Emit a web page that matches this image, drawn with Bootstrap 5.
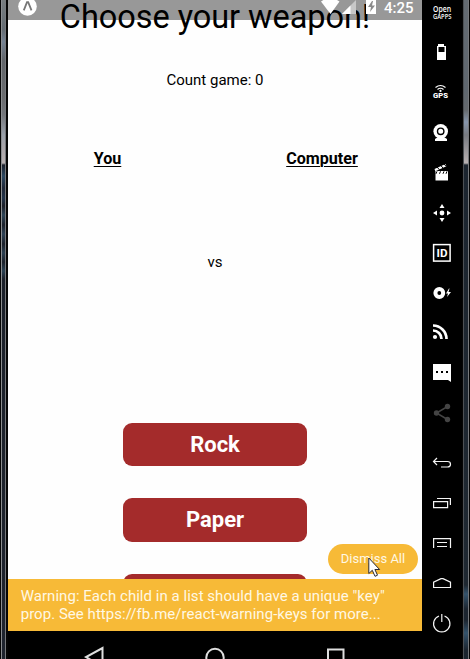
<!DOCTYPE html>
<html lang="en">
<head>
<meta charset="utf-8">
<meta name="viewport" content="width=device-width, initial-scale=1">
<title>Choose your weapon!</title>
<link href="https://cdn.jsdelivr.net/npm/bootstrap@5.3.0/dist/css/bootstrap.min.css" rel="stylesheet">
<style>
body{width:470px;height:659px;font-family:Roboto,"Liberation Sans",sans-serif;color:#000;background:#000}
svg{display:block}
.device{width:470px;height:659px}
.edge{width:8px;flex:none;background:#050505;padding:0 2px 0 1px}
.edge-r{padding:0 1px}
.glass{border-left:1px solid #8b8d90;border-right:1px solid #77797c;width:6px;
background:linear-gradient(#777d80 0,#656d74 30px,#748293 42px,#62666b 60px,#6b6d70 98px,#74777c 115px,#9aa1ab 135px,#aaa6aa 148px,#b8b1b2 163px,#1c212d 165px,#2c4962 176px,#202838 188px,#22344b 198px,#1c1f28 206px,#2d4558 215px,#1c212b 225px,#2d4256 234px,#1c212b 244px,#2b4052 253px,#1c212b 262px,#2b4254 271px,#1c212b 279px,#1f242e 100%)}
.edge-r .glass{border-left-color:#4c5054;background:linear-gradient(#646b72 0,#5f676f 90px,#65696d 110px,#8695ab 122px,#777a80 135px,#b8b1b2 163px,#1c252f 165px,#1f2831 585px,#34536c 594px,#1c252f 609px,#1c252f 620px,#34536c 633px,#1c252f 650px)}
.screen{width:414px;flex:none}
.app{height:631px;background:#fefefe}
.app h1{font-size:32.5px;line-height:40px;font-weight:400;margin:-3px 0 0;white-space:nowrap;letter-spacing:-.05px}
.count{font-size:15px;line-height:20px;margin-top:33px}
.players{margin-top:59px;font-size:16.1px;line-height:20px;font-weight:700}
.players div{width:214.500px;flex:none}
.players div:first-child{width:199px}
.players div:last-child{width:230px}
.players span{text-decoration:underline;text-decoration-thickness:1px;text-underline-offset:2px}
.versus{font-size:15px;line-height:20px;margin-top:83px}
.weapons{margin-top:151px;gap:32.3px}
.weapons .btn{width:184px;height:43.2px;flex:none;border:0;border-radius:9px;background:#a42b2b;color:#fff;font-size:22px;font-weight:700;line-height:44px;padding:0}
.status{height:20px;background:rgba(0,0,0,.4);left:0;top:0;right:0}
.clock{color:#fff;font-size:15px;line-height:16px;font-weight:500;left:376px;top:0}
.warning{left:0;right:0;bottom:0;height:52px;padding:8px 12.7px;background:#f7ba37;color:#fff8e4;font-size:15px;line-height:18px;letter-spacing:.035px}
.dismiss{left:320px;top:544px;width:90px;height:30px;border:0;background:#f7ba37;color:#fff8e4;font-size:13px;line-height:30px;padding:0}
.cursor{left:360px;top:557px}
.tools{width:40px;flex:none;margin-top:-8px}
.tools svg{width:40px;height:40px;flex:none}
.tools svg:nth-child(12){margin-top:11px}
.solid{fill:#fff}
.thin{fill:none;stroke:#f4f4f4;stroke-width:1.2}
</style>
</head>
<body class="overflow-hidden">
<div class="device d-flex overflow-hidden">
  <div class="edge d-flex"><div class="glass"></div></div>
  <main class="screen d-flex flex-column">
    <div class="app position-relative overflow-hidden d-flex flex-column text-center">
      <h1>Choose your weapon!</h1>
      <div class="count">Count game: 0</div>
      <div class="players d-flex"><div><span>You</span></div><div><span>Computer</span></div></div>
      <div class="versus">vs</div>
      <div class="weapons d-flex flex-column align-items-center">
        <button class="btn">Rock</button>
        <button class="btn">Paper</button>
        <button class="btn" aria-label="Scissors"></button>
      </div>
      <div class="status position-absolute">
        <svg width="414" height="20" viewBox="8 0 414 20">
          <circle cx="27.5" cy="6.5" r="9.3" fill="#fff"/>
          <path d="M23.8 10.3 27 2.2h1.2l3.3 8.1" fill="none" stroke="#777" stroke-width="1.8"/>
          <path d="M321 1.5Q330-5 339.500 1.500L330.500 14Z" fill="#fff"/>
          <path d="M342 14 356 0V14Z" fill="#c7c7c7"/><path d="M342 14 350.500 5.500V14Z" fill="#fff"/>
          <path d="M366 0h10v14h-10Z" fill="#fff"/><path d="m372 1-4 6h3l-1 5 5-6.500h-3l1-4.500Z" fill="#8b8b8b"/>
        </svg>
        <div class="clock position-absolute">4:25</div>
      </div>
      <div class="warning position-absolute text-start text-nowrap">Warning: Each child in a list should have a unique "key"<br>prop. See https://fb.me/react-warning-keys for more...</div>
      <button class="dismiss position-absolute rounded-pill">Dismiss All</button>
      <svg class="cursor position-absolute" width="14" height="22" viewBox="0 0 14 22"><path d="M.8 1v15.500l3.500-3.200 2.700 6 2.500-1.100-2.600-5.700h4.700Z" fill="#fff" stroke="#292936"/></svg>
    </div>
    <svg width="414" height="28" viewBox="8 631 414 28" fill="none" stroke="#dedede" stroke-width="2">
      <path d="M102.500 648v19L86 657Z"/><circle cx="215" cy="657.500" r="8.700"/><rect x="328" y="649.500" width="15.500" height="16"/>
    </svg>
  </main>
  <nav class="tools d-flex flex-column">
    <svg viewBox="0 0 40 40" class="solid" font-family="Open Sans, sans-serif"><text x="11" y="20.300" font-size="8.500" font-weight="600" textLength="18" lengthAdjust="spacingAndGlyphs">Open</text><text x="11" y="26.500" font-size="6.300" font-weight="600" textLength="18.500" lengthAdjust="spacingAndGlyphs">GAPPS</text></svg>
    <svg viewBox="0 0 40 40"><path fill="#fff" fill-rule="evenodd" d="M16 12h6v2h2v14h-9V14h1ZM16.500 15v5h6v-5Z"/></svg>
    <svg viewBox="0 0 40 40" class="solid"><path d="M13.500 15.500q5-4 10 0M15.500 17.500q3-2.500 6 0" fill="none" stroke="#fff" stroke-width="1.200"/><circle cx="18.500" cy="18.900" r="1.100"/><text x="11" y="26.200" font-size="7" font-weight="900" font-family="Roboto" textLength="15" lengthAdjust="spacingAndGlyphs">GPS</text></svg>
    <svg viewBox="0 0 40 40" class="solid"><path d="M13 29v-2l3-2h6l3 2v2Z"/><circle cx="18.700" cy="19.300" r="7.300"/><circle cx="18.700" cy="19.300" r="3.200" fill="none" stroke="#000" stroke-width="1.400"/><circle cx="19" cy="19" r="1.200"/></svg>
    <svg viewBox="0 0 40 40" class="solid"><path d="M13.500 19h12.500v9.500H13.500ZM12.500 17l11-5 .9 2.300-11 5Z"/><path d="m15 15 2.500 2.800m1-4.600 2.500 2.800m1-4.200 2 2.500m-9 5-1 2.500m4.500-2.500-1 2.500m4.500-2.500-1 2.500m4-2.500-1 2.500" stroke="#000" stroke-width="1"/></svg>
    <svg viewBox="0 0 40 40" class="solid"><circle cx="20" cy="21" r="2.400"/><path d="m20 12 2.500 4h-5Zm0 18 2.500-4h-5ZM11 21l4-2.400v4.800Zm18 0-4-2.400v4.800Z"/></svg>
    <svg viewBox="0 0 40 40" class="solid"><rect x="11.600" y="12.600" width="16.500" height="16.500" fill="none" stroke="#fff" stroke-width="1.500"/><text x="14.500" y="25" font-size="11.500" font-weight="700" font-family="Roboto" textLength="11" lengthAdjust="spacingAndGlyphs">ID</text></svg>
    <svg viewBox="0 0 40 40" class="solid"><circle cx="17.300" cy="21" r="3.900" fill="none" stroke="#fff" stroke-width="4"/><path d="m27 16.500-3 5h2l-1 3.500 4-5h-2.500l1-3.500Z"/></svg>
    <svg viewBox="0 0 40 40" class="solid"><path d="M11 13.500A13.500 13.500 0 0 1 24.500 27M11 18.500a8.500 8.500 0 0 1 8.500 8.500" fill="none" stroke="#fff" stroke-width="2.700"/><circle cx="13" cy="25" r="2.100"/></svg>
    <svg viewBox="0 0 40 40" class="solid"><path d="M11 12h18v18l-3-2H11Z"/><path d="M14 19h2v2h-2Zm5 0h2v2h-2Zm5 0h2v2h-2Z" fill="#000"/></svg>
    <svg viewBox="0 0 40 40" fill="#444"><path d="m25.500 14.500-11 6.500 11 6.500" fill="none" stroke="#444" stroke-width="1.500"/><circle cx="25.500" cy="14.500" r="2.700"/><circle cx="14.500" cy="21" r="2.700"/><circle cx="25.500" cy="27.500" r="2.700"/></svg>
    <svg viewBox="0 0 40 40" class="thin"><path d="m15 15-3.500 3.500L15 22M11.500 18.500h14q3 0 3 2.700t-3 2.800H19"/></svg>
    <svg viewBox="0 0 40 40" class="thin"><path d="M11.600 18.600h14v6h-14ZM15 15.500h13.400v6.500"/></svg>
    <svg viewBox="0 0 40 40" class="thin"><path d="M11.600 25V15.600h16.900V25M15 19.500h10M15 23.500h10"/></svg>
    <svg viewBox="0 0 40 40" class="thin"><path d="M11.600 24.500v-5.300L19 15.600h2l7.500 3.600v5.300Z"/></svg>
    <svg viewBox="0 0 40 40" class="thin"><path d="M17 13a8.200 8.200 0 1 0 5.500 0M19.800 11v8"/></svg>
  </nav>
  <div class="edge edge-r d-flex"><div class="glass"></div></div>
</div>
<script src="https://cdn.jsdelivr.net/npm/bootstrap@5.3.0/dist/js/bootstrap.bundle.min.js"></script>
</body>
</html>
